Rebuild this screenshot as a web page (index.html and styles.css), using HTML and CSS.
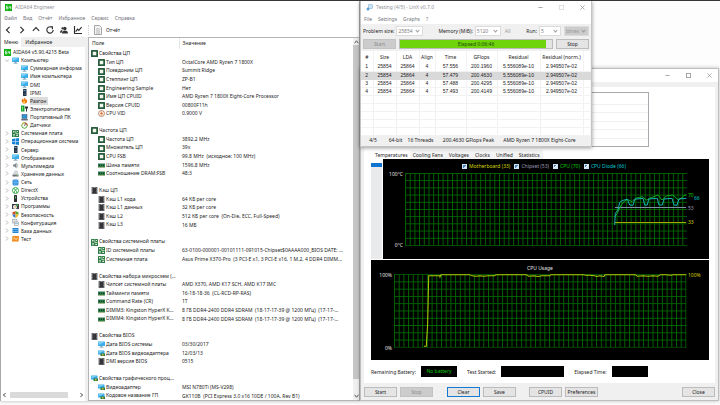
FILE: index.html
```html
<!DOCTYPE html>
<html lang="ru">
<head>
<meta charset="utf-8">
<title>AIDA64 Engineer</title>
<link rel="stylesheet" href="styles.css">
</head>
<body>
<svg class="sprite" aria-hidden="true">
  <symbol id="i-64" viewBox="0 0 14 14"><rect width="14" height="14" fill="#12b312"/><path d="M6 4H3v6h3V7H3M8.500 4v3.500h3.500M11.500 4v6" fill="none" stroke="#fff" stroke-width="1.300"/></symbol>
  <symbol id="i-pc" viewBox="0 0 14 14"><rect x="0" y="1" width="14" height="9" rx="1" fill="#3aaee8"/><path d="M1 2h12L1 8z" fill="#7fd0f8"/><rect x="5" y="10" width="4" height="2" fill="#7ba0b8"/><rect x="3" y="12" width="8" height="1" fill="#5f89a5"/></symbol>
  <symbol id="i-gpu" viewBox="0 0 14 14"><rect x="0" y="1" width="13" height="8" rx="1" fill="#36a7e4"/><path d="M1 2h11L1 7z" fill="#79cdf7"/><path d="M5 7h9v5H5z" fill="#2f7d3b"/><rect x="8" y="8" width="3" height="3" fill="#e0b43a"/></symbol>
  <symbol id="i-cpu" viewBox="0 0 14 14"><rect x="0" y="0" width="14" height="14" rx="1" fill="#265c3c"/><rect x="3.500" y="3.500" width="7" height="7" fill="#f1f6f0"/></symbol>
  <symbol id="i-vid" viewBox="0 0 14 14"><circle cx="7" cy="7" r="6" fill="#f7e9df" stroke="#a87352" stroke-width="1.500"/><path d="M8 2L4 8h3l-1 4 4-6H7z" fill="#e05a18"/></symbol>
  <symbol id="i-ram" viewBox="0 0 14 14"><rect x="0" y="3" width="14" height="8" fill="#2f7f4d"/><path d="M2 5h2v3H2zM6 5h2v3H6zM10 5h2v3h-2z" fill="#173d26"/><path d="M1 11h12" stroke="#bfb26a"/></symbol>
  <symbol id="i-chip" viewBox="0 0 14 14"><path d="M1 0h12v14H1z" fill="#77777a"/><rect x="3" y="1" width="8" height="12" fill="#333438"/><path d="M5 0h4v2H5z" fill="#909094"/><path d="M1 3h2M1 6h2M1 9h2M11 3h2M11 6h2M11 9h2" stroke="#c4c4c6"/></symbol>
  <symbol id="i-board" viewBox="0 0 14 14"><rect width="14" height="14" rx="1" fill="#2d7b45"/><path d="M2 2h3v3H2zM7 1h1.500v5H13v1.500H7zM2 8h4v1.500H2zM2 11h4v1.500H2zM8.500 9.500H12V12H8.500zM10 2h2v2h-2z" fill="#d9ecd8"/></symbol>
  <symbol id="i-server" viewBox="0 0 14 14"><rect x="4" y="0" width="7" height="14" rx="1" fill="#263547"/><rect x="5" y="2" width="4" height="2" fill="#67a8d8"/><circle cx="8" cy="10" r="1" fill="#8fb4cf"/></symbol>
  <symbol id="i-fire" viewBox="0 0 14 14"><path d="M2 3c2 1 2 3 3 3 0-3 2-4 3-5 0 3 2 3 2 5 1 0 1-1 1-2 2 3 2 8-2 9H5C1 12 1 7 2 3z" fill="#f07d13"/><path d="M6 7c2 1 3 4 1 6H5c-2-2 0-4 1-6z" fill="#ffd13b"/></symbol>
  <symbol id="i-power" viewBox="0 0 14 14"><rect x="0" y="1" width="7" height="12" rx="1" fill="#16a02c"/><path d="M2 3h2v8H2z" fill="#78dc80"/><path d="M8 3h6v4h-2v6h-2V7H8z" fill="#2e3436"/></symbol>
  <symbol id="i-laptop" viewBox="0 0 14 14"><rect x="2" y="1" width="10" height="8" fill="#2f93d6" stroke="#3d5265"/><path d="M0 10h14l-1 3H1z" fill="#68717a"/></symbol>
  <symbol id="i-sensor" viewBox="0 0 14 14"><circle cx="7" cy="7" r="5.500" fill="#fff" stroke="#53a93f" stroke-width="2"/><path d="M7 1.500A5.500 5.500 0 0 1 12.500 7" fill="none" stroke="#d8402a" stroke-width="2"/><path d="M7 1.500A5.500 5.500 0 0 0 2 5" fill="none" stroke="#e3b22c" stroke-width="2"/><path d="M7 8l2-5" stroke="#333" stroke-width="1.500"/></symbol>
  <symbol id="i-win" viewBox="0 0 14 14"><path d="M0 2l6-1v5.500H0zM7 1l7-1v6.500H7zM0 7.500h6V13l-6-1zM7 7.500h7V14l-7-1z" fill="#1583d8"/></symbol>
  <symbol id="i-sound" viewBox="0 0 14 14"><path d="M2 5h3l4-4v12L5 9H2z" fill="#7d858c"/><path d="M10 3c2 2 2 6 0 8" fill="none" stroke="#9aa3aa" stroke-width="1.500"/></symbol>
  <symbol id="i-disk" viewBox="0 0 14 14"><path d="M1 9h12v4H1z" fill="#6b6e72"/><path d="M5 1h6l2 7H2z" fill="#d3d6d9"/><rect x="9" y="10" width="3" height="1" fill="#7ddc6c"/></symbol>
  <symbol id="i-net" viewBox="0 0 14 14"><rect x="1" y="1" width="12" height="12" rx="3" fill="#2f8fdc"/><path d="M3 4h8M3 7h8M3 10h8" stroke="#9fd6fa"/></symbol>
  <symbol id="i-dx" viewBox="0 0 14 14"><circle cx="7" cy="7" r="6" fill="#fff" stroke="#21a33a" stroke-width="1.800"/><path d="M3 3c3 1 6 5 7 9M11 3c-3 1-6 5-7 9" fill="none" stroke="#21a33a" stroke-width="1.800"/></symbol>
  <symbol id="i-dev" viewBox="0 0 14 14"><rect x="4" y="0" width="6" height="14" rx="1" fill="#2b2e31"/><rect x="6" y="3" width="2" height="4" fill="#5dc26a"/></symbol>
  <symbol id="i-prog" viewBox="0 0 14 14"><path d="M0 2h14v10H0z" fill="#3b4046"/><circle cx="6" cy="8" r="4" fill="#f5f5f5"/><path d="M9 1l4 3-4 4z" fill="#3f9d52"/><path d="M5 6h3v3H5z" fill="#e0c268"/></symbol>
  <symbol id="i-shield" viewBox="0 0 14 14"><path d="M7 0v7H1V2c3 0 4-1 6-2z" fill="#e14a25"/><path d="M7 0v7h6V2C10 2 9 1 7 0z" fill="#5aa82c"/><path d="M1 7h6v7C3 12 1 10 1 7z" fill="#2a78cf"/><path d="M13 7H7v7c4-2 6-4 6-7z" fill="#f4bd20"/></symbol>
  <symbol id="i-conf" viewBox="0 0 14 14"><rect x="1" y="1" width="9" height="7" fill="#dfe3e6" stroke="#8f979d"/><rect x="5" y="6" width="8" height="7" fill="#eceff1" stroke="#7d878e"/><path d="M6 9h6" stroke="#5897c5"/></symbol>
  <symbol id="i-db" viewBox="0 0 14 14"><path d="M1 2h12v10H1z" fill="#2385d4"/><path d="M1 5h12M1 9h12" stroke="#a9d8f7"/></symbol>
  <symbol id="i-test" viewBox="0 0 14 14"><path d="M1 2h13l-1 11H0z" fill="#f08a1c"/><path d="M3 9l2-4 3 5 3-5" fill="none" stroke="#ffe0a8" stroke-width="1.500"/></symbol>
  <symbol id="i-chev" viewBox="0 0 6 10"><path d="M1 1l4 4-4 4" fill="none" stroke="#8a8a8a" stroke-width="1.200"/></symbol>
  <symbol id="i-min" viewBox="0 0 12 12"><path d="M1 6h10" stroke="#999" stroke-width="2"/></symbol>
  <symbol id="i-max" viewBox="0 0 12 12"><rect x="1" y="1" width="10" height="10" fill="none" stroke="currentColor" stroke-width="2"/></symbol>
  <symbol id="i-close" viewBox="0 0 12 12"><path d="M1 1l10 10M11 1L1 11" stroke="#999" stroke-width="1.800"/></symbol>
  <symbol id="i-up" viewBox="0 0 8 6"><path d="M1 5l3-4 3 4" fill="none" stroke="#555" stroke-width="1.600"/></symbol>
</svg>

<main class="desktop">

<section class="window aida" aria-label="AIDA64 Engineer">
  <header class="titlebar"><svg class="ic"><use href="#i-64"/></svg><span>AIDA64 Engineer</span></header>
  <nav class="menu aida-menu"><a href="#">Файл</a><a href="#">Вид</a><a href="#">Отчёт</a><a href="#">Избранное</a><a href="#">Сервис</a><a href="#">Справка</a></nav>
  <div class="toolbar">
    <div class="tools">
      <button aria-label="Назад"><svg viewBox="0 0 10 10"><path d="M7 1L3 5l4 4"/></svg></button>
      <button aria-label="Вперёд"><svg viewBox="0 0 10 10"><path d="M3 1l4 4-4 4"/></svg></button>
      <button aria-label="Вверх"><svg viewBox="0 0 10 10"><path d="M1 6l4-4 4 4"/></svg></button>
      <button aria-label="Обновить"><svg viewBox="0 0 10 10"><path d="M7 1.500A4 4 0 1 0 9 5M4.500 1H8v3"/></svg></button>
      <button aria-label="Пользователи"><svg viewBox="0 0 10 10"><g class="solid"><circle cx="6" cy="3" r="2.200"/><path d="M2.500 9.500c0-3 1-4 3.500-4s4 1 4 4z"/><circle cx="3" cy="3" r="1.300"/><path d="M0 8.500C0 6 1 5 3 5L2 8.500z"/></g></svg></button>
      <button aria-label="График"><svg viewBox="0 0 10 10"><path d="M.6 0v9.400H10M2 7l2.500-3L6 5.500 9.500 1.500"/></svg></button>
    </div>
    <button class="report"><svg viewBox="0 0 8 10"><path d="M.5.500h5l2 2v7h-7z" fill="#f6f6f6" stroke="#a5a5a5"/><path d="M2 4h4M2 6h4M2 8h4" stroke="#b5b5b5"/></svg><span>Отчёт</span></button>
  </div>
  <div class="panes">
    <div class="side">
      <div class="side-tabs"><button class="on">Меню</button><button>Избранное</button></div>
      <div class="tree-wrap">
        <ul class="tree">
          <li class="root"><svg class="ic"><use href="#i-64"/></svg><span>AIDA64 v5.90.4215 Beta</span></li>
          <li class="top open"><svg class="chev"><use href="#i-chev"/></svg><svg class="ic"><use href="#i-pc"/></svg><span>Компьютер</span></li>
          <li class="sub"><svg class="ic"><use href="#i-pc"/></svg><span>Суммарная информа</span></li>
          <li class="sub"><svg class="ic"><use href="#i-pc"/></svg><span>Имя компьютера</span></li>
          <li class="sub"><svg class="ic"><use href="#i-pc"/></svg><span>DMI</span></li>
          <li class="sub"><svg class="ic"><use href="#i-server"/></svg><span>IPMI</span></li>
          <li class="sub"><svg class="ic"><use href="#i-fire"/></svg><span class="picked">Разгон</span></li>
          <li class="sub"><svg class="ic"><use href="#i-power"/></svg><span>Электропитание</span></li>
          <li class="sub"><svg class="ic"><use href="#i-laptop"/></svg><span>Портативный ПК</span></li>
          <li class="sub"><svg class="ic"><use href="#i-sensor"/></svg><span>Датчики</span></li>
          <li class="top"><svg class="chev"><use href="#i-chev"/></svg><svg class="ic"><use href="#i-board"/></svg><span>Системная плата</span></li>
          <li class="top"><svg class="chev"><use href="#i-chev"/></svg><svg class="ic"><use href="#i-win"/></svg><span>Операционная система</span></li>
          <li class="top"><svg class="chev"><use href="#i-chev"/></svg><svg class="ic"><use href="#i-server"/></svg><span>Сервер</span></li>
          <li class="top"><svg class="chev"><use href="#i-chev"/></svg><svg class="ic"><use href="#i-pc"/></svg><span>Отображение</span></li>
          <li class="top"><svg class="chev"><use href="#i-chev"/></svg><svg class="ic"><use href="#i-sound"/></svg><span>Мультимедиа</span></li>
          <li class="top"><svg class="chev"><use href="#i-chev"/></svg><svg class="ic"><use href="#i-disk"/></svg><span>Хранение данных</span></li>
          <li class="top"><svg class="chev"><use href="#i-chev"/></svg><svg class="ic"><use href="#i-net"/></svg><span>Сеть</span></li>
          <li class="top"><svg class="chev"><use href="#i-chev"/></svg><svg class="ic"><use href="#i-dx"/></svg><span>DirectX</span></li>
          <li class="top"><svg class="chev"><use href="#i-chev"/></svg><svg class="ic"><use href="#i-dev"/></svg><span>Устройства</span></li>
          <li class="top"><svg class="chev"><use href="#i-chev"/></svg><svg class="ic"><use href="#i-prog"/></svg><span>Программы</span></li>
          <li class="top"><svg class="chev"><use href="#i-chev"/></svg><svg class="ic"><use href="#i-shield"/></svg><span>Безопасность</span></li>
          <li class="top"><svg class="chev"><use href="#i-chev"/></svg><svg class="ic"><use href="#i-conf"/></svg><span>Конфигурация</span></li>
          <li class="top"><svg class="chev"><use href="#i-chev"/></svg><svg class="ic"><use href="#i-db"/></svg><span>База данных</span></li>
          <li class="top"><svg class="chev"><use href="#i-chev"/></svg><svg class="ic"><use href="#i-test"/></svg><span>Тест</span></li>
        </ul>
        <div class="hscroll"><svg class="arrow left"><use href="#i-up"/></svg><i></i><svg class="arrow right"><use href="#i-up"/></svg></div>
      </div>
    </div>
    <div class="detail">
      <table class="fields">
        <thead><tr><th>Поле</th><th>Значение</th></tr></thead>
        <tbody>
          <tr class="g"><td><svg class="ic"><use href="#i-cpu"/></svg>Свойства ЦП</td><td></td></tr>
          <tr><td><svg class="ic"><use href="#i-cpu"/></svg>Тип ЦП</td><td>OctalCore AMD Ryzen 7 1800X</td></tr>
          <tr><td><svg class="ic"><use href="#i-cpu"/></svg>Псевдоним ЦП</td><td>Summit Ridge</td></tr>
          <tr><td><svg class="ic"><use href="#i-cpu"/></svg>Степпинг ЦП</td><td>ZP-B1</td></tr>
          <tr><td><svg class="ic"><use href="#i-cpu"/></svg>Engineering Sample</td><td>Нет</td></tr>
          <tr><td><svg class="ic"><use href="#i-cpu"/></svg>Имя ЦП CPUID</td><td>AMD Ryzen 7 1800X Eight-Core Processor</td></tr>
          <tr><td><svg class="ic"><use href="#i-cpu"/></svg>Версия CPUID</td><td>00800F11h</td></tr>
          <tr><td><svg class="ic"><use href="#i-vid"/></svg>CPU VID</td><td>0.9000 V</td></tr>
          <tr><td></td><td></td></tr>
          <tr class="g"><td><svg class="ic"><use href="#i-cpu"/></svg>Частота ЦП</td><td></td></tr>
          <tr><td><svg class="ic"><use href="#i-cpu"/></svg>Частота ЦП</td><td>3892.2 MHz</td></tr>
          <tr><td><svg class="ic"><use href="#i-cpu"/></svg>Множитель ЦП</td><td>39x</td></tr>
          <tr><td><svg class="ic"><use href="#i-cpu"/></svg>CPU FSB</td><td>99.8 MHz&nbsp; (исходное: 100 MHz)</td></tr>
          <tr><td><svg class="ic"><use href="#i-ram"/></svg>Шина памяти</td><td>1596.8 MHz</td></tr>
          <tr><td><svg class="ic"><use href="#i-ram"/></svg>Соотношение DRAM:FSB</td><td>48:3</td></tr>
          <tr><td></td><td></td></tr>
          <tr class="g"><td><svg class="ic"><use href="#i-chip"/></svg>Кэш ЦП</td><td></td></tr>
          <tr><td><svg class="ic"><use href="#i-chip"/></svg>Кэш L1 кода</td><td>64 КБ per core</td></tr>
          <tr><td><svg class="ic"><use href="#i-chip"/></svg>Кэш L1 данных</td><td>32 КБ per core</td></tr>
          <tr><td><svg class="ic"><use href="#i-chip"/></svg>Кэш L2</td><td>512 КБ per core&nbsp; (On-Die, ECC, Full-Speed)</td></tr>
          <tr><td><svg class="ic"><use href="#i-chip"/></svg>Кэш L3</td><td>16 МБ</td></tr>
          <tr><td></td><td></td></tr>
          <tr class="g"><td><svg class="ic"><use href="#i-board"/></svg>Свойства системной платы</td><td></td></tr>
          <tr><td><svg class="ic"><use href="#i-board"/></svg>ID системной платы</td><td>63-0100-000001-00101111-091015-Chipset$0AAAA000_BIOS DATE: ...</td></tr>
          <tr><td><svg class="ic"><use href="#i-board"/></svg>Системная плата</td><td>Asus Prime X370-Pro&nbsp; (3 PCI-E x1, 3 PCI-E x16, 1 M.2, 4 DDR4 DIMM...</td></tr>
          <tr><td></td><td></td></tr>
          <tr class="g"><td><svg class="ic"><use href="#i-chip"/></svg>Свойства набора микросхем (...</td><td></td></tr>
          <tr><td><svg class="ic"><use href="#i-chip"/></svg>Чипсет системной платы</td><td>AMD X370, AMD K17 SCH, AMD K17 IMC</td></tr>
          <tr><td><svg class="ic"><use href="#i-ram"/></svg>Тайминги памяти</td><td>16-18-18-36&nbsp; (CL-RCD-RP-RAS)</td></tr>
          <tr><td><svg class="ic"><use href="#i-ram"/></svg>Command Rate (CR)</td><td>1T</td></tr>
          <tr><td><svg class="ic"><use href="#i-ram"/></svg>DIMM3: Kingston HyperX K...</td><td>8 ГБ DDR4-2400 DDR4 SDRAM&nbsp; (18-17-17-39 @ 1200 МГц)&nbsp; (17-17-...</td></tr>
          <tr><td><svg class="ic"><use href="#i-ram"/></svg>DIMM4: Kingston HyperX K...</td><td>8 ГБ DDR4-2400 DDR4 SDRAM&nbsp; (18-17-17-39 @ 1200 МГц)&nbsp; (17-17-...</td></tr>
          <tr><td></td><td></td></tr>
          <tr class="g"><td><svg class="ic"><use href="#i-chip"/></svg>Свойства BIOS</td><td></td></tr>
          <tr><td><svg class="ic"><use href="#i-pc"/></svg>Дата BIOS системы</td><td>03/30/2017</td></tr>
          <tr><td><svg class="ic"><use href="#i-gpu"/></svg>Дата BIOS видеоадаптера</td><td>12/03/13</td></tr>
          <tr><td><svg class="ic"><use href="#i-chip"/></svg>DMI версия BIOS</td><td>0515</td></tr>
          <tr><td></td><td></td></tr>
          <tr class="g"><td><svg class="ic"><use href="#i-gpu"/></svg>Свойства графического проц...</td><td></td></tr>
          <tr><td><svg class="ic"><use href="#i-gpu"/></svg>Видеоадаптер</td><td>MSI N780Ti (MS-V298)</td></tr>
          <tr><td><svg class="ic"><use href="#i-gpu"/></svg>Кодовое название ГП</td><td>GK110B&nbsp; (PCI Express 3.0 x16 10DE / 100A, Rev B1)</td></tr>
        </tbody>
      </table>
      <div class="vscroll"><svg class="arrow"><use href="#i-up"/></svg><i></i><svg class="arrow down"><use href="#i-up"/></svg></div>
    </div>
  </div>
</section>

<section class="window stab" aria-label="System Stability Test">
  <header class="stab-title">
    <svg><use href="#i-min"/></svg><svg class="dark"><use href="#i-max"/></svg><svg><use href="#i-close"/></svg>
  </header>
  <div class="stab-body">
    <div class="log"><span></span><span></span><span></span><span></span><span></span></div>
    <div class="stab-tabs"><button class="on">Temperatures</button><button>Cooling Fans</button><button>Voltages</button><button>Clocks</button><button>Unified</button><button>Statistics</button></div>
    <div class="temp-row">
      <div class="picker"><i></i></div>
      <div class="chart temp">
        <div class="legend">
          <label class="c-mb"><input type="checkbox" checked>Motherboard (33)</label>
          <label class="c-ch"><input type="checkbox" checked>Chipset (53)</label>
          <label class="c-cpu"><input type="checkbox" checked>CPU (70)</label>
          <label class="c-di"><input type="checkbox" checked>CPU Diode (66)</label>
        </div>
        <svg class="plot" viewBox="383 170 326 89" preserveAspectRatio="none">
          <defs><pattern id="grid-t" x="405" y="173" width="4.700" height="7.200" patternUnits="userSpaceOnUse"><path d="M0 .5h4.700M.5 0v7.200" class="grid"/></pattern></defs>
          <rect x="405" y="173" width="282" height="72.800" fill="url(#grid-t)"/>
          <text x="403" y="176" class="ax end">100°C</text><text x="403" y="247" class="ax end">0°C</text>
          <path d="M615 222.500h71" class="l-mb"/>
          <path d="M615 207.500h71" class="l-ch"/>
          <path d="M614.700 217L617.300 213.300 621.300 205 624.700 201 627.300 199.300 632 201.700 635.300 198.300 642.300 196.700 646.300 200 649.700 198.300 658 195 662 200 666.300 196 673 195 678 199.700 682 197.700 684 195.300 686.300 195" class="l-cpu"/>
          <path d="M614.700 225L615.300 213.300 618 210 619.700 202.300 623 200.300 627.300 199.300 629.700 205 633 205.300 634.700 199.300 643 198.300 644.700 205 647.300 205 648.700 199 657.300 198.300 659 205 662.300 205 664 199 672 198.300 674 205 677 205.300 679 199 686.300 198.300" class="l-di"/>
          <text x="688" y="197" class="c-cpu">70</text><text x="694" y="200" class="c-di">66</text><text x="688" y="210" class="c-ch">53</text><text x="688" y="224" class="c-mb">33</text>
        </svg>
      </div>
    </div>
    <div class="chart usage">
      <svg class="plot" viewBox="371 260 338 99" preserveAspectRatio="none">
        <defs><pattern id="grid-u" x="394" y="274" width="4.700" height="7.200" patternUnits="userSpaceOnUse"><path d="M0 .5h4.700M.5 0v7.200" class="grid"/></pattern></defs>
        <rect x="394" y="274" width="292.500" height="72.800" fill="url(#grid-u)"/>
        <text x="540" y="270" class="ax mid">CPU Usage</text>
        <text x="392" y="277" class="ax end">100%</text><text x="392" y="349" class="ax end">0%</text><text x="688" y="277" class="c-mb">100%</text>
        <path d="M424 345.500H426.300L427.700 322 428.700 275.700H439.700L440 277 441 274.500H469.700L472 275.700 476 276 480 275.500 484 276 488 275.500 494.700 275.700 496 274.500H526.300L528.700 276 534 275.500 538 276.300 542 275.500 549.700 275.700 551 274.500H584L585.300 275.200 590 275 594.700 275.500 596.300 276.300 600 275.700 604 276.300 605 274.500H635.300L637.300 276 643 275.500 648 276.200 653 275.500 658 276 660.700 274.500 666 274.500 670 275.200 674 274.500H686.300" class="l-use"/>
      </svg>
    </div>
    <div class="status">
      <span>Remaining Battery:</span><output class="battery">No battery</output>
      <span>Test Started:</span><output class="started"></output>
      <span>Elapsed Time:</span><output class="elapsed"></output>
    </div>
  </div>
  <footer class="actions">
    <button>Start</button><button disabled>Stop</button><button class="focus">Clear</button><button>Save</button><button class="cpuid">CPUID</button><button>Preferences</button><button class="close">Close</button>
  </footer>
</section>

<section class="window linx" aria-label="LinX">
  <header class="titlebar linx-title">
    <svg class="ic" viewBox="0 0 14 14"><rect x="5" y="1" width="8" height="8" rx="1" fill="#cfe5f4" stroke="#6aa7d3"/><circle cx="4" cy="10" r="3" fill="#5aa0d4"/></svg>
    <span>Testing (4/5) - LinX v0.7.0</span>
    <div class="winbtns"><svg><use href="#i-min"/></svg><svg class="faint"><use href="#i-max"/></svg><svg><use href="#i-close"/></svg></div>
  </header>
  <nav class="menu linx-menu"><a href="#">File</a><a href="#">Settings</a><a href="#">Graphs</a><a href="#">?</a></nav>
  <div class="linx-top">
    <div class="opts">
      <label for="ps">Problem size:</label><span class="combo w-ps"><select id="ps"><option>25854</option></select></span>
      <label for="mem" class="mem">Memory (MiB):</label><span class="combo w-mem"><select id="mem"><option>5120</option></select></span>
      <span class="all">All</span>
      <label for="run" class="run">Run:</label><span class="combo w-run"><select id="run"><option>5</option></select></span>
      <span class="combo w-times"><select disabled aria-label="Run unit"><option>times</option></select></span>
    </div>
    <div class="go"><button disabled>Start</button><div class="bar" role="progressbar"><i></i><span>Elapsed 0:06:46</span></div><button>Stop</button></div>
  </div>
  <table class="runs">
    <colgroup><col class="n"><col class="s"><col class="l"><col class="a"><col class="t"><col class="f"><col class="r"><col class="m"><col></colgroup>
    <thead><tr><th>#</th><th>Size</th><th>LDA</th><th>Align</th><th>Time</th><th>GFlops</th><th>Residual</th><th>Residual (norm.)</th><th></th></tr></thead>
    <tbody>
      <tr><td>1</td><td>25854</td><td>25864</td><td>4</td><td>57.556</td><td>200.1960</td><td>5.556089e-10</td><td>2.949507e-02</td><td></td></tr>
      <tr class="sel"><td>2</td><td>25854</td><td>25864</td><td>4</td><td>57.479</td><td>200.4630</td><td>5.556089e-10</td><td>2.949507e-02</td><td></td></tr>
      <tr><td>3</td><td>25854</td><td>25864</td><td>4</td><td>57.488</td><td>200.4295</td><td>5.556089e-10</td><td>2.949507e-02</td><td></td></tr>
      <tr><td>4</td><td>25854</td><td>25864</td><td>4</td><td>57.493</td><td>200.4149</td><td>5.556089e-10</td><td>2.949507e-02</td><td></td></tr>
      <tr><td></td><td></td><td></td><td></td><td></td><td></td><td></td><td></td><td></td></tr>
      <tr><td></td><td></td><td></td><td></td><td></td><td></td><td></td><td></td><td></td></tr>
      <tr><td></td><td></td><td></td><td></td><td></td><td></td><td></td><td></td><td></td></tr>
      <tr><td></td><td></td><td></td><td></td><td></td><td></td><td></td><td></td><td></td></tr>
      <tr><td></td><td></td><td></td><td></td><td></td><td></td><td></td><td></td><td></td></tr>
    </tbody>
  </table>
  <footer class="linx-status"><span>4/5</span><span>64-bit</span><span>16 Threads</span><span>200.4630 GFlops Peak</span><span>AMD Ryzen 7 1800X Eight-Core</span></footer>
</section>

</main>
</body>
</html>
```
FILE: styles.css
```css
* { box-sizing: border-box; }
html, body { height: 100%; }
body {
  margin: 0;
  background: #fdfdfd;
  color: #1c1c24;
  font: 5px/8px "Noto Sans", "Open Sans", sans-serif;
  overflow: hidden;
}
button, select, input { font: inherit; color: inherit; margin: 0; padding: 0; }
button { border: 0; background: none; white-space: nowrap; }
a { color: inherit; text-decoration: none; }
table { border-collapse: collapse; table-layout: fixed; }
th, td { padding: 0; font-weight: 400; text-align: left; white-space: nowrap; }
.sprite { position: absolute; width: 0; height: 0; }
.ic { width: 7px; height: 7px; flex: none; }

.desktop { position: relative; height: 100%; border-top: 1px solid #38353b; overflow: hidden; }
.window { position: absolute; display: flex; flex-direction: column; background: #fff; }
.titlebar { display: flex; align-items: center; gap: 3px; height: 12px; padding-left: 4px; color: #92929a; }
.menu { display: flex; align-items: center; color: #74747c; }

/* AIDA64 main window */
.aida { left: 0; right: 50%; top: 0; bottom: 4px; border-left: 1px solid #aaa; border-right: 1px solid #aaa; box-shadow: 0 1px 3px #0003; }
.aida-menu { height: 10px; gap: 6px; padding-left: 3px; }
.toolbar { display: flex; align-items: center; height: 14px; }
.tools { display: flex; gap: 6px; width: 87px; padding-left: 3px; }
.tools button { width: 8px; height: 8px; flex: none; }
.tools svg { display: block; width: 8px; height: 8px; fill: none; stroke: #2b2b2b; stroke-width: 1.400; overflow: visible; }
.tools .solid { fill: #333; stroke: none; }
.report { display: flex; align-items: center; gap: 4px; padding-left: 5px; border-left: 1px dotted #ccc; }
.report svg { width: 8px; height: 10px; }
.panes { flex: 1; min-height: 0; display: flex; gap: 3px; background: #efefef; }
.side { width: 84px; display: flex; flex-direction: column; }
.side-tabs { display: flex; height: 10px; }
.side-tabs button { padding: 0 4px; line-height: 10px; }
.side-tabs .on { background: #fff; padding: 0 3px; }
.tree-wrap { flex: 1; display: flex; flex-direction: column; justify-content: space-between; background: #fff; overflow: hidden; }
.tree { display: grid; grid-auto-rows: 1fr; height: 195px; margin: 1px 0 0; padding: 0; list-style: none; }
.tree li { display: flex; align-items: center; gap: 2px; white-space: nowrap; overflow: hidden; }
.root { padding-left: 3px; }
.top { padding-left: 4px; }
.sub { padding-left: 20px; }
.chev { width: 4px; height: 5px; margin-right: 1px; flex: none; }
.open .chev { transform: rotate(90deg); }
.picked { background: #dcdcdc; padding-right: 2px; }
.hscroll { display: flex; align-items: center; height: 7px; margin-bottom: 3px; }
.hscroll i { flex: 1; margin: 0 10px 0 2px; height: 6px; background: #dadada; }
.arrow { width: 5px; height: 4px; flex: none; margin: 0 1px; }
.left { transform: rotate(-90deg); }
.right { transform: rotate(90deg); }
.down { transform: rotate(180deg); }
.detail { flex: 1; min-width: 0; display: flex; background: #fff; border: 1px solid #b4b4b8; border-right: 0; }
.fields { flex: 1; width: 100%; height: 100%; }
.fields th { height: 11px; line-height: 11px; padding-left: 3px; }
.fields th:first-child { width: 90px; border-right: 1px solid #e6e6e6; }
.fields td { height: 8px; padding-left: 3px; overflow: hidden; }
.fields td:first-child { padding-left: 9px; }
.fields .g td:first-child { padding-left: 2px; }
.fields .ic { vertical-align: middle; margin-right: 1px; }
.vscroll { width: 6px; display: flex; flex-direction: column; align-items: center; background: #f0f0f0; padding: 2px 0; }
.vscroll i { flex: 1; width: 6px; margin: 1px 0 15px; background: #c6c6c6; }

/* Stability test window */
.stab { left: 50%; right: 1px; top: 67px; bottom: 4px; border: 1px solid #bdbdbd; background: #f0f0f0; padding: 0 3px; box-shadow: 0 0 4px #0004; }
.stab-title { display: flex; justify-content: flex-end; align-items: center; gap: 16px; height: 13px; margin: 0 -3px 5px; padding-right: 6px; background: #fff; }
.stab-title svg { width: 5px; height: 5px; }
.dark { color: #999; }
.stab-body { flex: 1; min-height: 0; display: flex; flex-direction: column; background: #fff; padding: 5px 6px 6px 7px; }
.log { height: 55px; width: 278px; border: 1px solid #a9a9b0; display: grid; padding-top: 11px; }
.log span { border-top: 1px solid #f0f0f0; }
.stab-tabs { display: flex; height: 12px; align-items: flex-end; }
.stab-tabs button { height: 9px; padding: 0 3px; background: #f3f3f3; }
.stab-tabs .on { background: #fff; padding: 0 2px 0 4px; }
.temp-row { flex: 1; min-height: 0; display: flex; gap: 1px; margin-bottom: 1px; }
.picker { width: 11px; padding-top: 4px; }
.picker i { display: block; height: 100%; border-top: 4px solid #0c74d0; background: #e8eaec; }
.chart { background: #000; display: flex; flex-direction: column; min-height: 0; min-width: 0; }
.temp { flex: 1; padding-top: 3px; }
.usage { flex: 1; }
.plot { flex: 1; width: 100%; min-height: 0; display: block; }
.legend { display: flex; justify-content: center; gap: 4px; height: 8px; padding-right: 4px; }
.legend label { display: flex; align-items: center; gap: 2px; }
.legend input { appearance: none; width: 5px; height: 5px; background: #d8e8f8 linear-gradient(135deg, #4d7fb4 0 40%, #fff 40% 50%, #4d7fb4 50% 60%, #cfe2f5 60%); border: 1px solid #cfe2f5; }
.c-mb { color: #d6d600; fill: #d6d600; }
.c-ch { color: #9c9cb8; fill: #9c9cb8; }
.c-cpu { color: #00c800; fill: #00c800; }
.c-di { color: #00c4d0; fill: #00c4d0; }
.plot .ax { fill: #e4e4e4; }
.end { text-anchor: end; }
.mid { text-anchor: middle; }
.plot path { fill: none; stroke-width: 1; }
.plot .grid { stroke: #006400; }
.plot .l-mb { stroke: #a8a800; }
.plot .l-ch { stroke: #8090a8; }
.plot .l-cpu { stroke: #10a820; }
.plot .l-di { stroke: #18b4b8; }
.plot .l-use { stroke: #b4c800; }
.status { display: flex; align-items: center; margin-top: 6px; height: 11px; }
.status output { height: 11px; background: #000; color: #00c800; text-align: center; line-height: 11px; margin: 0 10px 0 5px; }
.battery { width: 36px; }
.started { width: 63px; }
.elapsed { width: 36px; }
.actions { display: flex; gap: 3px; padding: 4px 0 3px; }
.actions button, .go button { width: 33px; height: 10px; line-height: 8px; border: 1px solid #bcbcbc; background: #e4e4e4; }
.actions button:disabled, .go button:disabled { background: #cccccc; border-color: #c2c2c2; color: #8c8c8c; }
.actions .focus { border-color: #1479d0; margin-left: 11px; }
.actions .cpuid { margin-left: 10px; }
.actions .close { margin-left: auto; }

/* LinX window */
.linx { left: 50%; width: 232px; top: 0; border: 1px solid #c4c4c4; border-top: 0; box-shadow: 0 1px 4px #0006; }
.linx-title { padding: 0 5px; }
.winbtns { display: flex; gap: 16px; margin-left: auto; padding-right: 1px; }
.winbtns svg { width: 5px; height: 5px; }
.faint { color: #ddd; }
.linx-menu { height: 11px; gap: 6px; padding-left: 3px; }
.linx-top { background: #f0f0f0; padding: 2px; display: grid; gap: 3px; }
.opts { display: flex; align-items: center; }
.combo { position: relative; display: flex; height: 10px; margin-left: 2px; background: #fff; border: 1px solid #dcdcdc; color: #808080; }
.combo select { appearance: none; width: 100%; border: 0; background: none; padding-left: 1px; line-height: 8px; }
.combo::after { content: ""; position: absolute; right: 3px; top: 2px; width: 2px; height: 2px; border: solid #999; border-width: 0 1px 1px 0; transform: rotate(45deg); }
.w-ps { width: 27px; }
.w-mem { width: 26px; }
.w-run { width: 22px; }
.w-times { width: 25px; background: #ccc; margin-left: 3px; }
.mem { margin-left: 15px; }
.all { margin-left: 4px; color: #999; }
.run { margin-left: auto; }
.go { display: flex; gap: 3px; }
.bar { position: relative; flex: 1; border: 1px solid #bbb; background: #e4e4e4; text-align: center; line-height: 8px; color: #1c4a08; }
.bar i { position: absolute; inset: 0 6px 0 0; background: #6fd40c; }
.bar span { position: relative; }
.runs { width: 100%; font-family: "Liberation Sans", sans-serif; }
.runs th, .runs td { height: 8px; line-height: 7px; text-align: center; border: 1px solid #f2f2f2; border-width: 0 1px 1px 0; }
.runs th { height: 12px; border-bottom: 0; font-family: "Noto Sans", sans-serif; }
.runs .sel td { background: #d9d9d9; border-color: #d9d9d9; }
.n { width: 12px; }
.s, .l { width: 23px; }
.a { width: 16px; }
.t, .f { width: 31px; }
.r, .m { width: 43px; }
.linx-status { display: grid; grid-template-columns: 24px 21px 29px 67px 1fr; padding-right: 14px; height: 10px; text-align: center; background: #f0f0f0; }
```
